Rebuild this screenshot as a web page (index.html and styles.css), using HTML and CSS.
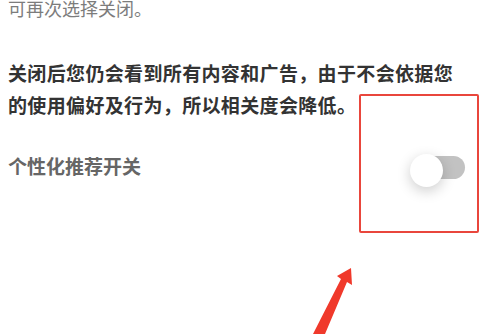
FILE: index.html
```html
<!DOCTYPE html>
<html lang="zh-CN">
<head>
<meta charset="utf-8">
<link rel="stylesheet" href="styles.css">
</head>
<body>
<div class="page">
  <p class="note">可再次选择关闭。</p>
  <p class="desc">关闭后您仍会看到所有内容和广告，由于不会依据您<br>的使用偏好及行为，所以相关度会降低。</p>
  <div class="row">
    <span class="label">个性化推荐开关</span>
    <div class="switch"><span class="track"></span><span class="thumb"></span></div>
  </div>
</div>
<div class="mark"></div>
<svg class="arrow" width="60" height="74" viewBox="0 0 60 74">
  <polygon points="51,8 52,25 47,22 25,74 13,74 41,19 37,16" fill="#f0392b"/>
</svg>
</body>
</html>
```
FILE: styles.css
```css
html, body {
  margin: 0;
  padding: 0;
  background: #ffffff;
}
body {
  width: 495px;
  height: 334px;
  overflow: hidden;
  position: relative;
  font-family: "Noto Sans CJK SC", "Noto Sans", sans-serif;
}
.page {
  padding: 0 30px 0 8px;
}
.note {
  margin: -7px 0 0;
  font-size: 18px;
  line-height: 30px;
  color: #7c7c7c;
}
.desc {
  margin: 34px 0 0;
  font-size: 19px;
  letter-spacing: 0.35px;
  line-height: 32px;
  font-weight: 700;
  color: #333333;
}
.row {
  margin-top: 31px;
  display: flex;
  justify-content: space-between;
  align-items: flex-start;
}
.label {
  font-size: 19px;
  line-height: 28px;
  font-weight: 700;
  color: #666666;
}
.switch {
  position: relative;
  width: 55px;
  height: 33px;
  margin-top: 2px;
}
.track {
  position: absolute;
  left: 4px;
  top: 2px;
  width: 51px;
  height: 23px;
  border-radius: 12px;
  background: #c2c2c2;
}
.thumb {
  position: absolute;
  left: 0;
  top: 0;
  width: 33px;
  height: 33px;
  border-radius: 50%;
  background: #ffffff;
  box-shadow: 0 4px 14px rgba(0, 0, 0, 0.2);
}
.mark {
  position: absolute;
  left: 359px;
  top: 94px;
  width: 116px;
  height: 135px;
  border: 2px solid #e9463c;
  border-radius: 2px;
}
.arrow {
  position: absolute;
  left: 300px;
  top: 260px;
}
```
